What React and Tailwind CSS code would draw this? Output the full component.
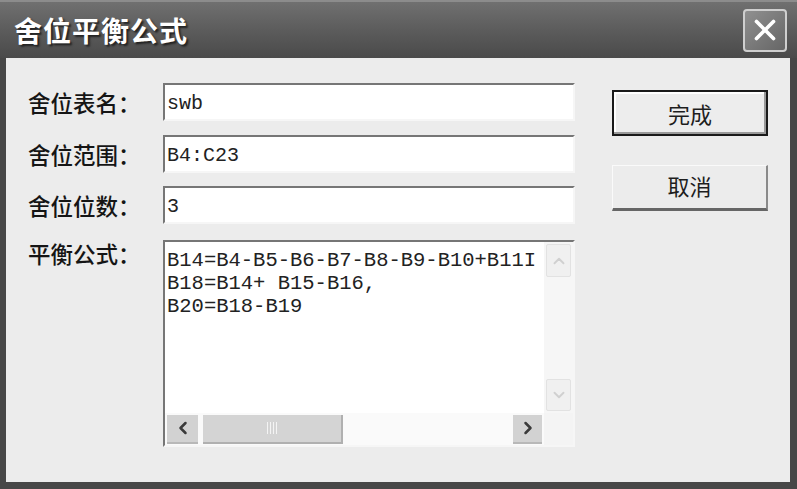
import { ChevronLeft, ChevronRight, ChevronUp, ChevronDown, X } from "lucide-react";

const cjk = "font-['Noto_Sans_CJK_SC',sans-serif]";
const mono = "font-['Liberation_Mono','Noto_Sans_CJK_SC',monospace]";

function Field({ value }) {
  return (
    <div className={`h-[38px] w-[412px] border-2 border-t-[#767676] border-l-[#767676] border-r-[#f6f6f6] border-b-[#f6f6f6] bg-white pl-[2px] pt-[7px] text-[20px] leading-[24px] text-[#222] ${mono}`}>
      {value}
    </div>
  );
}

function Label({ children, className = "" }) {
  return (
    <div className={`w-[135px] text-[22.5px] font-medium leading-[26px] text-[#151515] ${cjk} ${className}`}>
      {children}
    </div>
  );
}

export default function App() {
  return (
    <div className="flex h-[489px] w-[797px] flex-col bg-[#ececec]">
      <div className="flex h-[58px] items-center justify-between border-t-2 border-[#8c8c8c] bg-gradient-to-b from-[#707070] via-[#5c5c5c] to-[#4a4a4a] pl-[14px] pr-[10px]">
        <span className={`text-[28px] font-bold tracking-[1px] text-white [text-shadow:2px_2px_2px_#222] ${cjk}`}>
          舍位平衡公式
        </span>
        <div className="flex h-[43px] w-[44px] items-center justify-center rounded-[4px] border-2 border-[#cfcfcf] bg-gradient-to-br from-[#909090] to-[#666666]">
          <X size={34} strokeWidth={2.6} color="#ffffff" />
        </div>
      </div>

      <div className="flex flex-1 border-b-[7px] border-l-[6px] border-r-[7px] border-[#474747] pl-[22px] pt-[25px]">
        <div className="flex flex-col">
          <div className="flex items-center">
            <Label>舍位表名：</Label>
            <Field value="swb" />
          </div>
          <div className="mt-[14px] flex items-center">
            <Label>舍位范围：</Label>
            <Field value="B4:C23" />
          </div>
          <div className="mt-[13px] flex items-center">
            <Label>舍位位数：</Label>
            <Field value="3" />
          </div>
          <div className="mt-[16px] flex items-start">
            <Label>平衡公式：</Label>
            <div className="flex h-[207px] w-[412px] flex-col border-2 border-t-[#767676] border-l-[#767676] border-r-[#f6f6f6] border-b-[#f6f6f6] bg-white">
              <div className="flex flex-1">
                <div className={`flex-1 overflow-hidden whitespace-pre pl-[2px] pt-[7px] text-[20.5px] leading-[23px] text-[#222] ${mono}`}>
                  {"B14=B4-B5-B6-B7-B8-B9-B10+B11I\nB18=B14+ B15-B16,\nB20=B18-B19"}
                </div>
                <div className="flex w-[29px] flex-col justify-between bg-[#f6f6f6] px-[2px] py-[2px]">
                  <div className="flex h-[33px] items-center justify-center rounded-[2px] border border-[#e2e2e2] bg-[#f0f0f0]">
                    <ChevronUp size={18} strokeWidth={2.5} color="#d0d0d0" />
                  </div>
                  <div className="flex h-[32px] items-center justify-center rounded-[2px] border border-[#e2e2e2] bg-[#f0f0f0]">
                    <ChevronDown size={18} strokeWidth={2.5} color="#d0d0d0" />
                  </div>
                </div>
              </div>
              <div className="flex h-[32px]">
                <div className="flex flex-1 items-center bg-[#fafafa] px-[2px]">
                  <div className="flex h-[29px] w-[31px] items-center justify-center border-b-2 border-[#b8b8b8] bg-[#d2d2d2]">
                    <ChevronLeft size={20} strokeWidth={3} color="#3a3a3a" />
                  </div>
                  <div className="ml-[5px] flex h-[29px] w-[140px] items-center justify-center border-b-2 border-r-2 border-[#b0b0b0] bg-[#d4d4d4]">
                    <div className="flex gap-[2px]">
                      <span className="h-[12px] w-px bg-[#f4f4f4]" />
                      <span className="h-[12px] w-px bg-[#f4f4f4]" />
                      <span className="h-[12px] w-px bg-[#f4f4f4]" />
                      <span className="h-[12px] w-px bg-[#f4f4f4]" />
                    </div>
                  </div>
                  <div className="flex-1" />
                  <div className="flex h-[29px] w-[29px] items-center justify-center border-b-2 border-[#b8b8b8] bg-[#d2d2d2]">
                    <ChevronRight size={20} strokeWidth={3} color="#3a3a3a" />
                  </div>
                </div>
                <div className="w-[29px] bg-[#f4f4f4]" />
              </div>
            </div>
          </div>
        </div>

        <div className="ml-[37px] flex flex-col pt-[7px]">
          <div className={`flex h-[46px] w-[156px] items-center justify-center border-2 border-[#1a1a1a] bg-[#ededed] text-[22px] text-[#1e1e1e] shadow-[inset_-2px_-2px_0_#9a9a9a,inset_2px_2px_0_#ffffff] ${cjk}`}>
            完成
          </div>
          <div className={`mt-[29px] flex h-[46px] w-[156px] items-center justify-center border-b-[3px] border-l border-r-2 border-t border-b-[#666] border-l-[#fafafa] border-r-[#8a8a8a] border-t-[#fafafa] bg-[#ececec] pb-[4px] text-[22px] text-[#1e1e1e] ${cjk}`}>
            取消
          </div>
        </div>
      </div>
    </div>
  );
}
